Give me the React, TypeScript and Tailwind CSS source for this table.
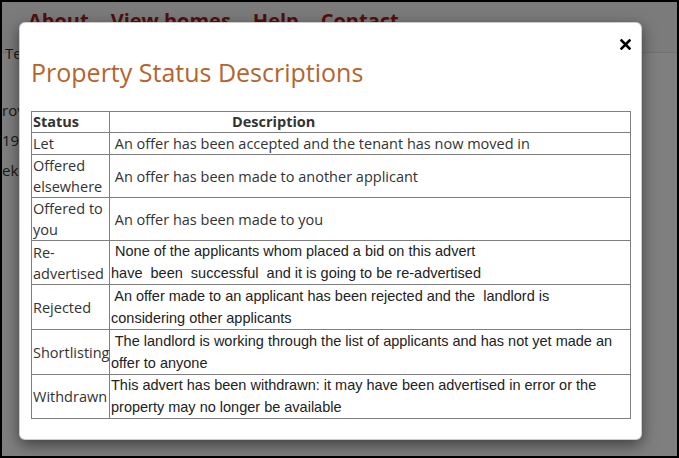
import React from 'react';

const openSans = "font-['Open_Sans',_sans-serif]";
const arial = "font-['Liberation_Sans',_Arial,_sans-serif]";

interface Row {
  status: React.ReactNode;
  lines: string[];
  arial?: boolean;
  tall?: boolean;
}

const rows: Row[] = [
  { status: 'Let', lines: [' An offer has been accepted and the tenant has now moved in'] },
  { status: <>Offered<br />elsewhere</>, lines: [' An offer has been made to another applicant'] },
  { status: <>Offered to<br />you</>, lines: [' An offer has been made to you'] },
  {
    status: <>Re-<br />advertised</>,
    lines: [
      ' None of the applicants whom placed a bid on this advert',
      'have  been  successful  and it is going to be re-advertised',
    ],
    arial: true,
  },
  {
    status: 'Rejected',
    lines: [
      ' An offer made to an applicant has been rejected and the  landlord is',
      'considering other applicants',
    ],
    arial: true,
    tall: true,
  },
  {
    status: 'Shortlisting',
    lines: [
      ' The landlord is working through the list of applicants and has not yet made an',
      'offer to anyone',
    ],
    arial: true,
    tall: true,
  },
  {
    status: 'Withdrawn',
    lines: [
      'This advert has been withdrawn: it may have been advertised in error or the',
      'property may no longer be available',
    ],
    arial: true,
  },
];

function CloseIcon() {
  return (
    <svg width="11" height="11" viewBox="0 0 11 11">
      <path d="M1.5 1.5 L9.5 9.5 M9.5 1.5 L1.5 9.5" stroke="#000" strokeWidth="2.6" strokeLinecap="square" />
    </svg>
  );
}

export default function App() {
  return (
    <div className={`relative w-[679px] h-[458px] overflow-hidden bg-white border-2 border-black ${openSans}`}>
      {/* page behind the dialog */}
      <div className="h-[51px] bg-[#f7f7f7] border-b border-[#e4e4e4] flex gap-[22px] pl-[26px] pt-[4px]">
        {['About', 'View homes', 'Help', 'Contact'].map((item) => (
          <span key={item} className="text-[20px] font-bold text-[#a81c1c] leading-[30px]">
            {item}
          </span>
        ))}
      </div>
      <div className="text-[15px] text-[#333] leading-[30px]">
        <p className="-mt-[15px] pl-[3px]">Te</p>
        <p className="mt-[27px]">rove Road</p>
        <p>1995</p>
        <p>eke</p>
      </div>

      {/* backdrop + dialog */}
      <div className="absolute inset-0 bg-black/50">
        <div className="absolute left-[17px] top-[20px] w-[623px] h-[418px] bg-white rounded-[6px] border border-black/20 shadow-[0_5px_15px_rgba(0,0,0,0.5)] px-[11px] pt-[33px]">
          <button className="absolute right-[10px] top-[16px] p-0 leading-none">
            <CloseIcon />
          </button>
          <h4 className="text-[25px] leading-[32px] text-[#b4642d] font-normal">
            Property Status Descriptions
          </h4>
          <table className="mt-[23px] w-[600px] table-fixed border-collapse text-[#333] text-[14.5px]">
            <colgroup>
              <col className="w-[78px]" />
              <col />
            </colgroup>
            <thead>
              <tr className="leading-[20px]">
                <th className="border border-[#7f7f7f] p-0 pl-[1px] text-left font-bold">Status</th>
                <th className="border border-[#7f7f7f] p-0 pl-[122px] text-left font-bold">Description</th>
              </tr>
            </thead>
            <tbody>
              {rows.map((row, i) => (
                <tr key={i}>
                  <td className="border border-[#7f7f7f] p-0 pl-[1px] leading-[21px] align-middle whitespace-nowrap">
                    {row.status}
                  </td>
                  <td
                    className={`border border-[#7f7f7f] p-0 pl-[1px] align-middle whitespace-pre ${
                      row.arial
                        ? `${arial} text-[14.5px] text-[#222] ${row.tall ? 'leading-[22px]' : 'leading-[21.5px]'}`
                        : 'leading-[21px]'
                    }`}
                  >
                    {row.lines.join('\n')}
                  </td>
                </tr>
              ))}
            </tbody>
          </table>
        </div>
      </div>
    </div>
  );
}
